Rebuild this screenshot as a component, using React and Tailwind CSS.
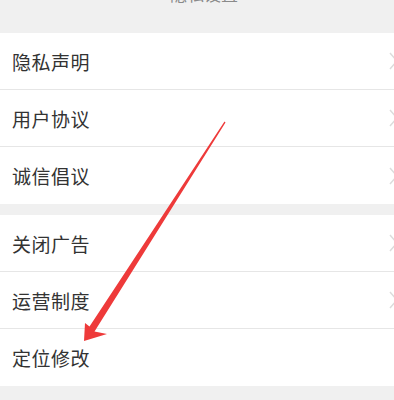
import React from "react";

const font = { fontFamily: '"Noto Sans CJK SC", "Noto Sans", sans-serif' };

function Chevron() {
  return (
    <svg width="10" height="20" viewBox="0 0 10 20" className="shrink-0">
      <polyline points="2,2 9,10 2,18" fill="none" stroke="#dcdcdc" strokeWidth="1.5" />
    </svg>
  );
}

function Row({ label, last, chevron = true }) {
  return (
    <div
      className={`h-[57px] flex items-center justify-between pl-[12px] pr-0 ${last ? "" : "border-b border-[#e6e6e6]"}`}
    >
      <span className="text-[19px] text-[#333333] leading-none tracking-[0.5px]">{label}</span>
      {chevron ? <div className="w-[6px] overflow-hidden flex"><Chevron /></div> : null}
    </div>
  );
}

export default function App() {
  return (
    <div className="relative w-[394px] h-[400px] bg-[#f0f0f0] overflow-hidden" style={font}>
      <div className="h-[33px] overflow-hidden flex justify-center">
        <span className="text-[17px] text-[#8a8a8a] leading-none -mt-[15px] ml-[14px]">隐私设置</span>
      </div>
      <div className="bg-white">
        <Row label="隐私声明" />
        <Row label="用户协议" />
        <Row label="诚信倡议" last />
      </div>
      <div className="bg-white mt-[11px]">
        <Row label="关闭广告" />
        <Row label="运营制度" />
        <Row label="定位修改" last chevron={false} />
      </div>
      <svg className="absolute left-0 top-0 pointer-events-none" width="394" height="400" viewBox="0 0 394 400">
        <polygon
          points="84,341 85,323 89.5,326.5 224.5,121.5 225.5,122.5 94.5,331.5 107,334"
          fill="#ee3a3a"
        />
      </svg>
    </div>
  );
}
